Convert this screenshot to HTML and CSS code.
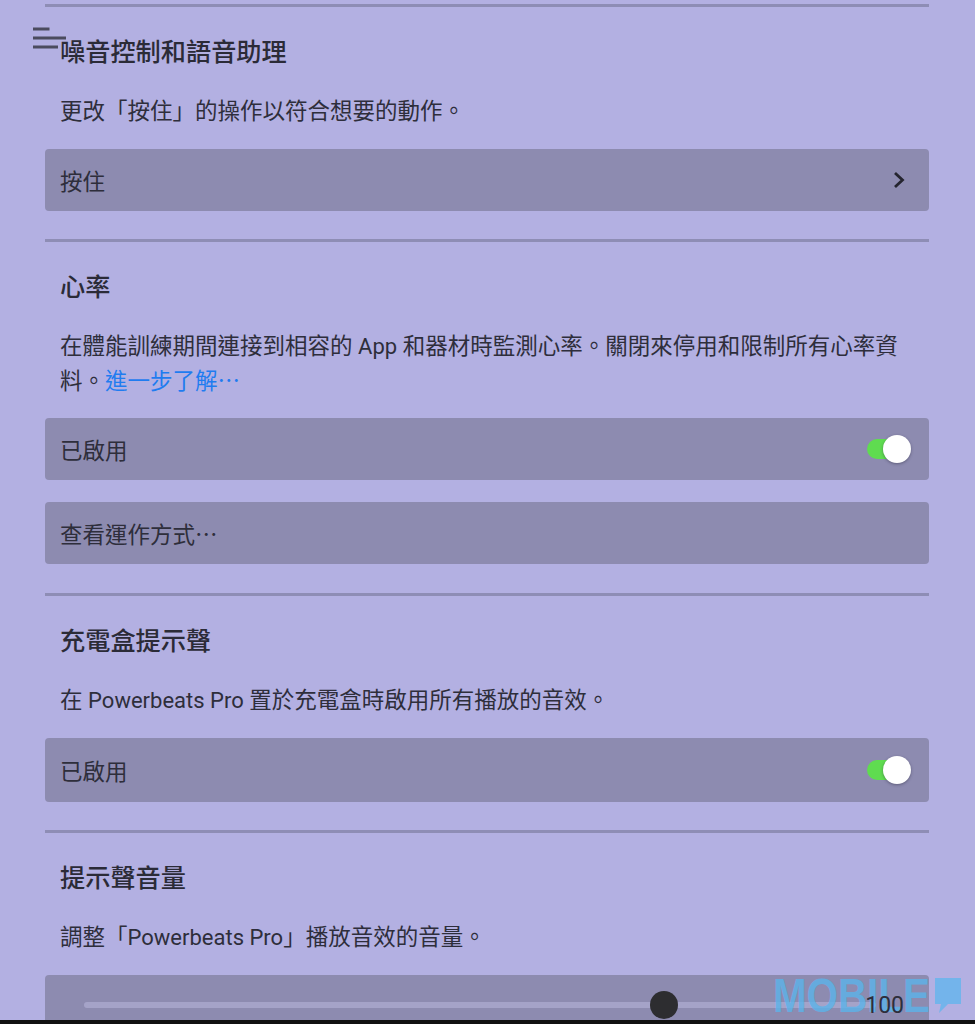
FILE: index.html
```html
<!DOCTYPE html>
<html lang="zh-Hant">
  <head>
    <title>Powerbeats Pro</title>
    <meta charset="UTF-8">
    <link rel="stylesheet" href="styles.css">
  </head>
  <body>
    <!-- menu icon sits over the page -->
    <svg class="menu-icon" width="34" height="24" viewBox="0 0 34 24">
      <path d="M0 3H16.500M0 12H33M0 21H25" fill="none" stroke="#4b4b5e" stroke-width="3"/>
    </svg>

    <main class="settings">
      <section class="group group-first">
        <h2>噪音控制和語音助理</h2>
        <p>更改「按住」的操作以符合想要的動作。</p>
        <div class="row">
          <span>按住</span>
          <svg class="chevron" width="12" height="18" viewBox="0 0 12 18">
            <path d="M2 2L9.500 9L2 16" fill="none" stroke="#25252f" stroke-width="2.800"/>
          </svg>
        </div>
      </section>

      <section class="group">
        <h2>心率</h2>
        <p class="wrapped">在體能訓練期間連接到相容的 <span class="latin">App</span> 和器材時監測心率。關閉來停用和限制所有心率資料。<a href="#">進一步了解⋯</a></p>
        <div class="row">
          <span>已啟用</span>
          <div class="toggle"><div class="knob"></div></div>
        </div>
        <div class="row row-next"><span>查看運作方式⋯</span></div>
      </section>

      <section class="group">
        <h2>充電盒提示聲</h2>
        <p>在 <span class="latin">Powerbeats Pro</span> 置於充電盒時啟用所有播放的音效。</p>
        <div class="row row-tall">
          <span>已啟用</span>
          <div class="toggle"><div class="knob"></div></div>
        </div>
      </section>

      <section class="group">
        <h2>提示聲音量</h2>
        <p>調整「<span class="latin">Powerbeats Pro</span>」播放音效的音量。</p>
        <div class="row row-slider">
          <div class="slider"><div class="thumb"></div></div>
          <span class="volume">100</span>
        </div>
      </section>
    </main>

    <!-- watermark -->
    <div class="watermark">
      <span class="watermark-text">MOBILE</span>
      <svg class="watermark-bubble" width="26" height="36" viewBox="0 0 26 36">
        <path d="M0 0H26V26H13L4 35L6 26H0Z" fill="#64b5ee"/>
      </svg>
    </div>
    <div class="bottom-bar"></div>
  </body>
</html>
```

FILE: styles.css
```css
html, body {
    margin: 0;
    height: 1024px;
    overflow: hidden;
}
body {
    position: relative;
    background-color: #b3b0e2;
    color: #2e2e3b;
    font-family: Roboto, "Noto Sans CJK TC", sans-serif;
}
.settings {
    width: 884px;
    margin-left: 45px;
    padding-top: 4px;
}
.group {
    border-top: 3px solid #8e8db5;
    padding-top: 28px;
    padding-bottom: 28px;
}
h2 {
    margin: 0 0 0 15px;
    font-size: 25.200px;
    line-height: 36px;
    font-weight: 500;
    color: #2b2b37;
}
p {
    margin: 23px 15px 20.500px;
    font-size: 22.500px;
    line-height: 34.500px;
    font-weight: 400;
}
p.wrapped {
    margin-bottom: 20px;
}
.latin {
    font-size: 22px;
    line-height: 1;
}
a {
    color: #1f7cf0;
    text-decoration: none;
}
.row {
    display: flex;
    align-items: center;
    justify-content: space-between;
    height: 62px;
    padding: 0 15px;
    border-radius: 4px;
    background-color: #8d8bb0;
    font-size: 22.500px;
}
.row-next {
    margin-top: 22px;
    margin-bottom: 0.500px;
}
.row-tall {
    height: 64px;
}
.row-slider {
    position: relative;
}
.chevron {
    margin-right: 9px;
}
.toggle {
    position: relative;
    width: 30px;
    height: 20px;
    margin-right: 17px;
    border-radius: 10px;
    background-color: #5fdc50;
}
.knob {
    position: absolute;
    left: 16px;
    top: -4px;
    width: 28px;
    height: 28px;
    border-radius: 50%;
    background-color: #fff;
    box-shadow: 0 1px 3px rgba(40, 40, 60, 0.45);
}
.slider {
    position: absolute;
    left: 39px;
    top: 27px;
    width: 792px;
    height: 6px;
    border-radius: 3px;
    background-color: #a5a3c8;
}
.thumb {
    position: absolute;
    left: 566px;
    top: -11px;
    width: 28px;
    height: 28px;
    border-radius: 50%;
    background-color: #2d2d30;
}
.volume {
    position: absolute;
    z-index: 2;
    right: 25px;
    top: 16px;
    font-size: 23px;
    line-height: 30px;
}
.watermark {
    position: absolute;
    z-index: 1;
    left: 773px;
    top: 978px;
    width: 188px;
    height: 36px;
    opacity: 0.8;
}
.watermark-text {
    display: block;
    color: #5cb4ea;
    font-family: "Liberation Sans", sans-serif;
    font-size: 48px;
    font-weight: 700;
    line-height: 35px;
    transform: scaleX(0.84);
    transform-origin: left center;
}
.watermark-bubble {
    position: absolute;
    left: 162px;
    top: 0;
}
.bottom-bar {
    position: absolute;
    z-index: 3;
    left: 0;
    right: 0;
    bottom: 0;
    height: 4px;
    background-color: #111;
}
.menu-icon {
    position: absolute;
    z-index: 3;
    left: 33px;
    top: 26px;
}
```
